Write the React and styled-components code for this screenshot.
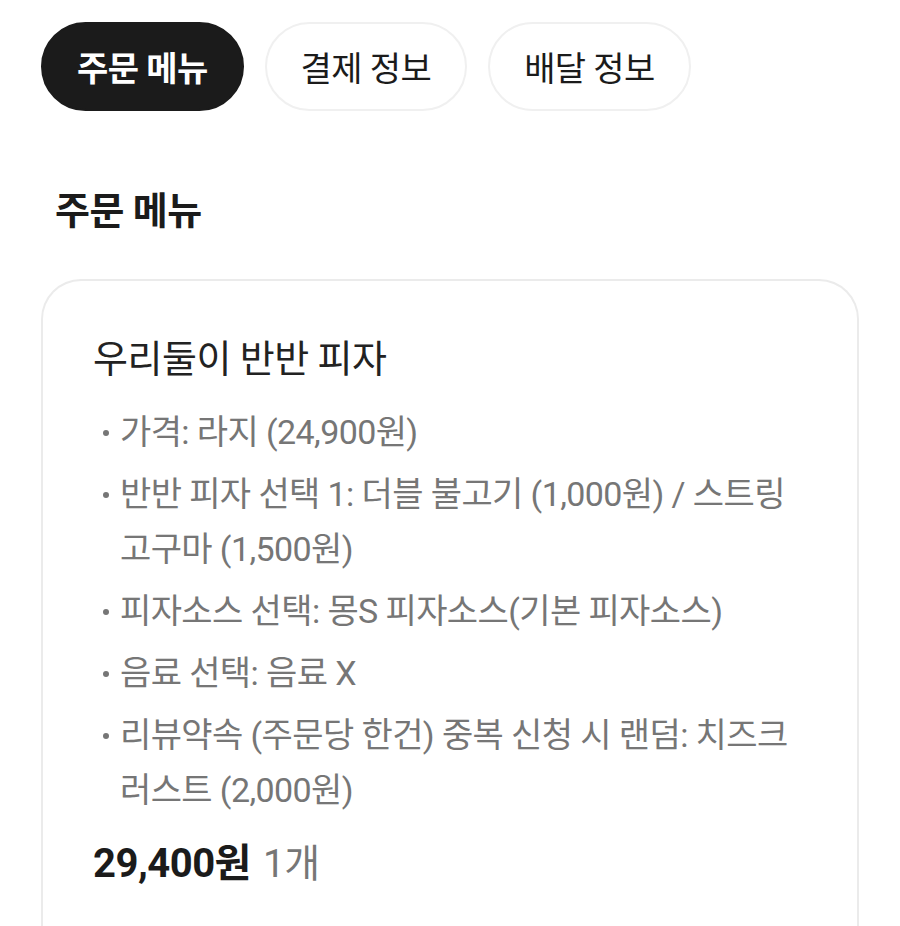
import React from 'react'
import styled, { createGlobalStyle } from 'styled-components'

const GlobalStyle = createGlobalStyle`
  * { box-sizing: border-box; }
  body {
    margin: 0;
    background: #fff;
    font-family: Roboto, "Noto Sans CJK KR", sans-serif;
    color: #1b1b1b;
  }
`

const Page = styled.div`
  padding: 22px 41px 0;
  height: 926px;
  overflow: hidden;
`

const Tabs = styled.nav`
  display: flex;
  gap: 21px;
`

const Tab = styled.button`
  height: 89px;
  padding: 0 34px;
  border-radius: 45px;
  border: 2px solid ${p => (p.$active ? '#1b1b1b' : '#f0f0f0')};
  background: ${p => (p.$active ? '#1b1b1b' : '#fff')};
  color: ${p => (p.$active ? '#fff' : '#1b1b1b')};
  font-family: inherit;
  font-size: 34px;
  font-weight: ${p => (p.$active ? 700 : 400)};
  letter-spacing: -0.6px;
  cursor: pointer;
`

const Heading = styled.h2`
  margin: 76px 0 0 14px;
  font-size: 38px;
  font-weight: 700;
  line-height: 48px;
  letter-spacing: -0.5px;
`

const Card = styled.section`
  margin-top: 44px;
  border: 2px solid #ebebeb;
  border-bottom: none;
  border-radius: 40px 40px 0 0;
  padding: 54px 48px 60px 50px;
  min-height: 700px;
`

const Title = styled.h3`
  margin: 0;
  font-size: 38px;
  font-weight: 400;
  line-height: 48px;
  color: #222;
  letter-spacing: -0.5px;
`

const Options = styled.ul`
  list-style: none;
  margin: 22px 0 0;
  padding: 0;
  display: flex;
  flex-direction: column;
  gap: 7px;
`

const Option = styled.li`
  position: relative;
  padding-left: 27px;
  font-size: 34px;
  line-height: 55px;
  color: #767676;
  letter-spacing: -0.6px;
  word-break: break-all;

  &::before {
    content: '';
    position: absolute;
    left: 10px;
    top: 25px;
    width: 6px;
    height: 6px;
    border-radius: 50%;
    background: #767676;
  }
`

const Price = styled.p`
  margin: 22px 0 0;
  line-height: 48px;
  letter-spacing: -0.5px;
`

const Amount = styled.strong`
  font-size: 40px;
  font-weight: 700;
  color: #1b1b1b;
`

const Count = styled.span`
  font-size: 39px;
  color: #767676;
  margin-left: 12px;
`

const options = [
  '가격: 라지 (24,900원)',
  '반반 피자 선택 1: 더블 불고기 (1,000원) / 스트링 고구마 (1,500원)',
  '피자소스 선택: 몽S 피자소스(기본 피자소스)',
  '음료 선택: 음료 X',
  '리뷰약속 (주문당 한건) 중복 신청 시 랜덤: 치즈크러스트 (2,000원)',
]

export default function App() {
  return (
    <>
      <GlobalStyle />
      <Page>
        <Tabs>
          <Tab $active>주문 메뉴</Tab>
          <Tab>결제 정보</Tab>
          <Tab>배달 정보</Tab>
        </Tabs>
        <Heading>주문 메뉴</Heading>
        <Card>
          <Title>우리둘이 반반 피자</Title>
          <Options>
            {options.map(o => (
              <Option key={o}>{o}</Option>
            ))}
          </Options>
          <Price>
            <Amount>29,400원</Amount>
            <Count>1개</Count>
          </Price>
        </Card>
      </Page>
    </>
  )
}
